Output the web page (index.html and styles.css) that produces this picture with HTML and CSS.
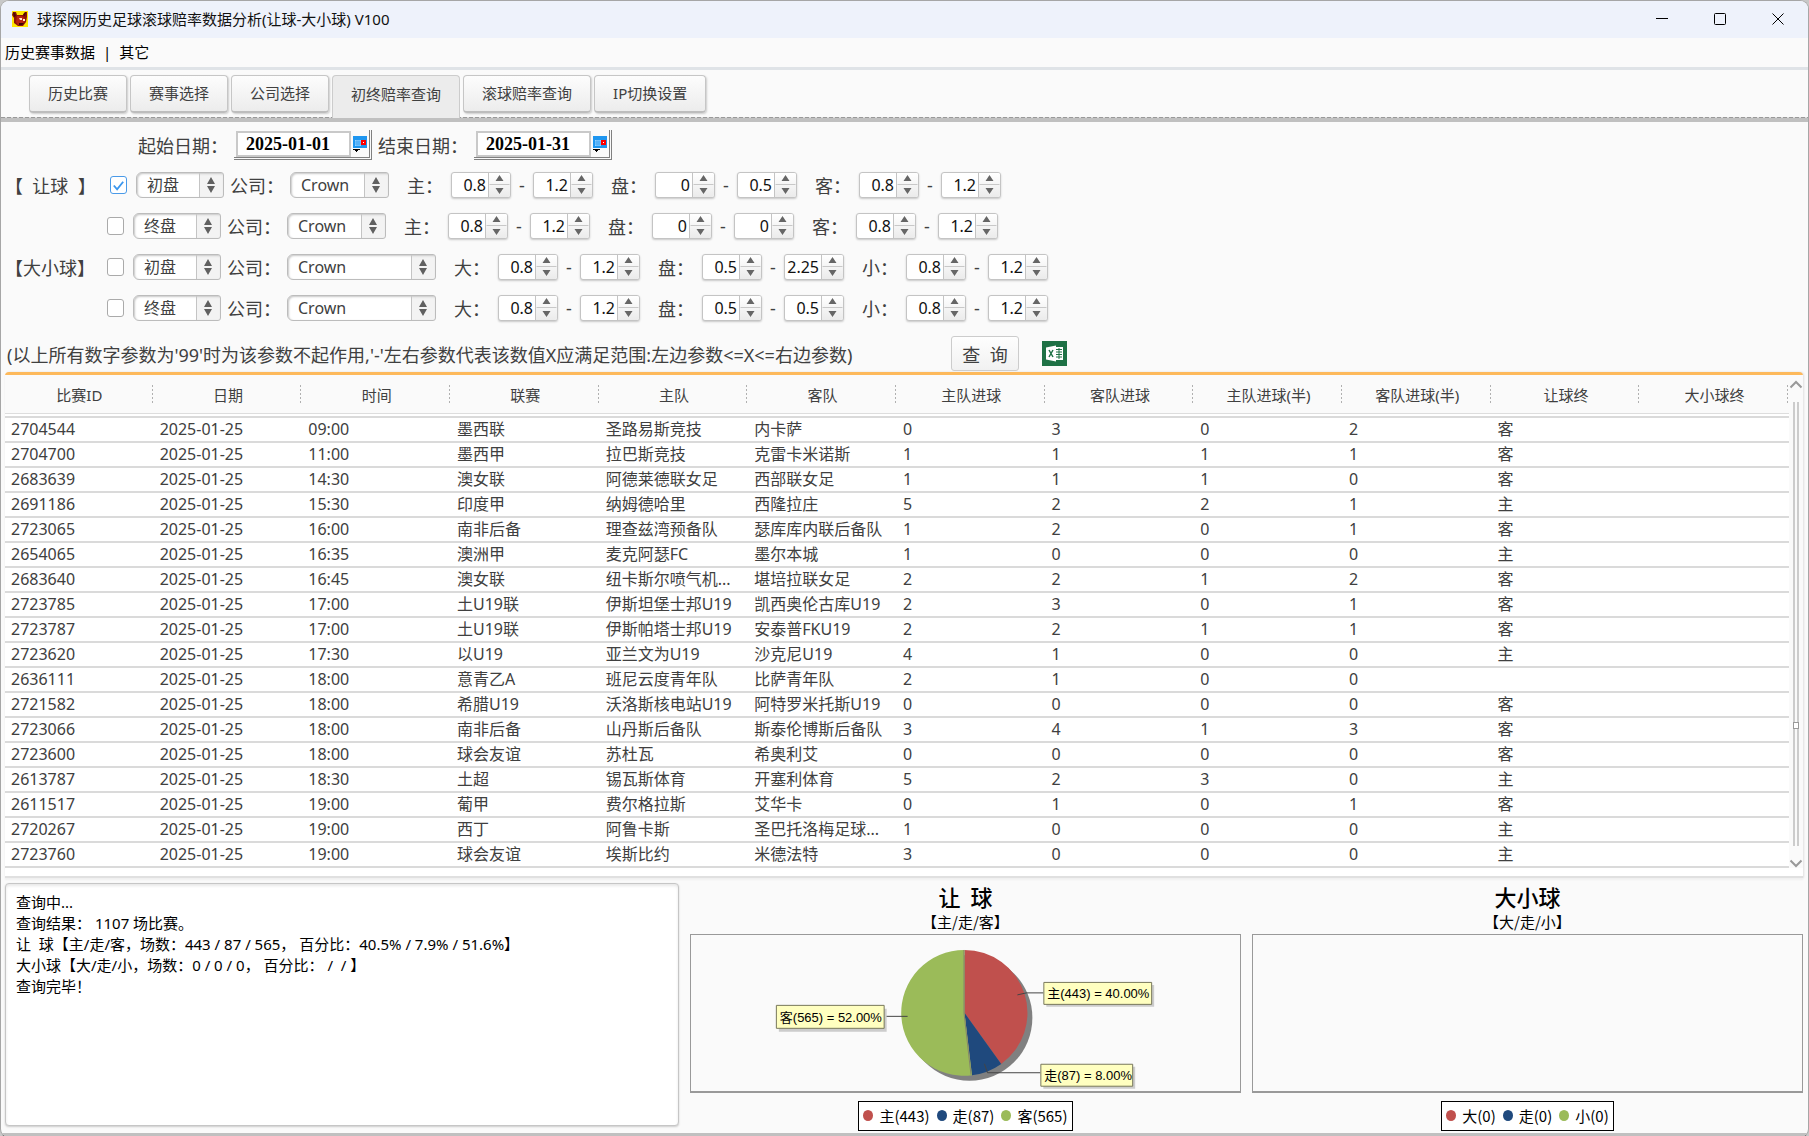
FILE: index.html
```html
<!DOCTYPE html>
<html lang="zh-CN">

<head>
	<meta charset="UTF-8">
	<title>球探网历史足球滚球赔率数据分析(让球-大小球) V100</title>
	<link rel="stylesheet" href="styles.css">
</head>

<body>
	<header class="titlebar">
		<svg class="app-icon" viewBox="0 0 16 16" aria-hidden="true">
			<rect width="16" height="16" fill="#ffe600"/>
			<path d="M1 1h3l1 3h6l2-3h2v5l-1 5-3 4H6L2 12V7L0 4z" fill="#8c1208"/>
			<path d="M5 5h5l3 3v2l-4 4H6L4 11z" fill="#b8240f"/>
			<path d="M1 1l2 1 1 3-2 1zM14 1l-1 4-2-1 1-2z" fill="#4a0a05"/>
			<path d="M7 7h3v2H8zM11 8h2v2h-2z" fill="#ffe9d0"/>
			<path d="M7 12h5l-2 2H7z" fill="#3c0602"/>
		</svg>
		<h1>球探网历史足球滚球赔率数据分析(让球-大小球) V100</h1>
		<div class="window-buttons">
			<button type="button" aria-label="最小化"><svg viewBox="0 0 12 12"><path d="M0 5.5h12"/></svg></button>
			<button type="button" aria-label="最大化"><svg viewBox="0 0 12 12"><rect x=".5" y=".5" width="11" height="11" rx="1"/></svg></button>
			<button type="button" aria-label="关闭"><svg viewBox="0 0 12 12"><path d="M.5.5l11 11M11.5.5l-11 11"/></svg></button>
		</div>
	</header>

	<nav class="menu">
		<a href="#history">历史赛事数据</a><span>|</span><a href="#other">其它</a>
	</nav>

	<nav class="tabs">
		<button type="button">历史比赛</button>
		<button type="button">赛事选择</button>
		<button type="button">公司选择</button>
		<button type="button" class="active">初终赔率查询</button>
		<button type="button">滚球赔率查询</button>
		<button type="button">IP切换设置</button>
	</nav>

	<form class="filters">
		<div class="dates">
			<label for="date-from">起始日期：</label>
			<span class="date-box">
				<input id="date-from" type="text" value="2025-01-01">
				<button type="button" aria-label="选择起始日期"><svg viewBox="0 0 14 16"><path d="M0 0h14v12H0z" fill="#1e96f0"/><path d="M2 4h6v6H2z" fill="#8fd0ff"/><path d="M2 6h6M2 8h6M4 4v6M6 4v6" stroke="#1e96f0" stroke-width=".6"/><path d="M8 4h5v5H8z" fill="#f00"/><path d="M10 6h1v1h-1z" fill="#fff"/><path d="M0 13h7v1H5v1H4v1H3v-1H2v-1H0z"/></svg></button>
			</span>
			<label for="date-to">结束日期：</label>
			<span class="date-box">
				<input id="date-to" type="text" value="2025-01-31">
				<button type="button" aria-label="选择结束日期"><svg viewBox="0 0 14 16"><path d="M0 0h14v12H0z" fill="#1e96f0"/><path d="M2 4h6v6H2z" fill="#8fd0ff"/><path d="M2 6h6M2 8h6M4 4v6M6 4v6" stroke="#1e96f0" stroke-width=".6"/><path d="M8 4h5v5H8z" fill="#f00"/><path d="M10 6h1v1h-1z" fill="#fff"/><path d="M0 13h7v1H5v1H4v1H3v-1H2v-1H0z"/></svg></button>
			</span>
		</div>

		<div class="filter-row">
			<span class="group wide">【&nbsp; 让球&nbsp; 】</span>
			<input type="checkbox" aria-label="让球初盘" checked>
			<select aria-label="盘口"><option>初盘</option><option>终盘</option></select>
			<label class="company" for="company-1">公司：</label>
			<select id="company-1" class="narrow"><option>Crown</option></select>
			<label class="odds" for="a1">主：</label>
			<input id="a1" type="number" step="any" value="0.8"><span class="dash">-</span><input type="number" step="any" value="1.2" aria-label="主上限">
			<label class="odds" for="a2">盘：</label>
			<input id="a2" type="number" step="any" value="0"><span class="dash">-</span><input type="number" step="any" value="0.5" aria-label="盘上限">
			<label class="odds" for="a3">客：</label>
			<input id="a3" type="number" step="any" value="0.8"><span class="dash">-</span><input type="number" step="any" value="1.2" aria-label="客上限">
		</div>
		<div class="filter-row">
			<span class="group"></span>
			<input type="checkbox" aria-label="让球终盘">
			<select aria-label="盘口"><option>终盘</option><option>初盘</option></select>
			<label class="company" for="company-2">公司：</label>
			<select id="company-2" class="narrow"><option>Crown</option></select>
			<label class="odds" for="b1">主：</label>
			<input id="b1" type="number" step="any" value="0.8"><span class="dash">-</span><input type="number" step="any" value="1.2" aria-label="主上限">
			<label class="odds" for="b2">盘：</label>
			<input id="b2" type="number" step="any" value="0"><span class="dash">-</span><input type="number" step="any" value="0" aria-label="盘上限">
			<label class="odds" for="b3">客：</label>
			<input id="b3" type="number" step="any" value="0.8"><span class="dash">-</span><input type="number" step="any" value="1.2" aria-label="客上限">
		</div>
		<div class="filter-row">
			<span class="group">【大小球】</span>
			<input type="checkbox" aria-label="大小球初盘">
			<select aria-label="盘口"><option>初盘</option><option>终盘</option></select>
			<label class="company" for="company-3">公司：</label>
			<select id="company-3" class="broad"><option>Crown</option></select>
			<label class="odds" for="c1">大：</label>
			<input id="c1" type="number" step="any" value="0.8"><span class="dash">-</span><input type="number" step="any" value="1.2" aria-label="大上限">
			<label class="odds" for="c2">盘：</label>
			<input id="c2" type="number" step="any" value="0.5"><span class="dash">-</span><input type="number" step="any" value="2.25" aria-label="盘上限">
			<label class="odds" for="c3">小：</label>
			<input id="c3" type="number" step="any" value="0.8"><span class="dash">-</span><input type="number" step="any" value="1.2" aria-label="小上限">
		</div>
		<div class="filter-row">
			<span class="group"></span>
			<input type="checkbox" aria-label="大小球终盘">
			<select aria-label="盘口"><option>终盘</option><option>初盘</option></select>
			<label class="company" for="company-4">公司：</label>
			<select id="company-4" class="broad"><option>Crown</option></select>
			<label class="odds" for="d1">大：</label>
			<input id="d1" type="number" step="any" value="0.8"><span class="dash">-</span><input type="number" step="any" value="1.2" aria-label="大上限">
			<label class="odds" for="d2">盘：</label>
			<input id="d2" type="number" step="any" value="0.5"><span class="dash">-</span><input type="number" step="any" value="0.5" aria-label="盘上限">
			<label class="odds" for="d3">小：</label>
			<input id="d3" type="number" step="any" value="0.8"><span class="dash">-</span><input type="number" step="any" value="1.2" aria-label="小上限">
		</div>

		<div class="actions">
			<p>(以上所有数字参数为'99'时为该参数不起作用,'-'左右参数代表该数值X应满足范围:左边参数&lt;=X&lt;=右边参数)</p>
			<button type="button" class="query">查&nbsp; 询</button>
			<button type="button" class="excel" aria-label="导出Excel">
				<svg viewBox="0 0 25 25">
					<rect width="25" height="25" fill="#1e7145"/>
					<path d="M13 6h8v13h-8z" fill="#fff"/>
					<path d="M14 8.500h6M14 11h6M14 13.500h6M14 16h6M17 7v11" stroke="#1e7145"/>
					<path d="M4 6.500l10-2v16l-10-2z" fill="#fff"/>
					<path d="M7 9l4 7M11 9l-4 7" stroke="#1e7145" stroke-width="1.500"/>
				</svg>
			</button>
		</div>
	</form>

	<section class="results">
		<table>
			<thead>
				<tr><th>比赛ID</th><th>日期</th><th>时间</th><th>联赛</th><th>主队</th><th>客队</th><th>主队进球</th><th>客队进球</th><th>主队进球(半)</th><th>客队进球(半)</th><th>让球终</th><th>大小球终</th></tr>
			</thead>
			<tbody>
				<tr><td>2704544</td><td>2025-01-25</td><td>09:00</td><td>墨西联</td><td>圣路易斯竞技</td><td>内卡萨</td><td>0</td><td>3</td><td>0</td><td>2</td><td>客</td><td></td></tr>
				<tr><td>2704700</td><td>2025-01-25</td><td>11:00</td><td>墨西甲</td><td>拉巴斯竞技</td><td>克雷卡米诺斯</td><td>1</td><td>1</td><td>1</td><td>1</td><td>客</td><td></td></tr>
				<tr><td>2683639</td><td>2025-01-25</td><td>14:30</td><td>澳女联</td><td>阿德莱德联女足</td><td>西部联女足</td><td>1</td><td>1</td><td>1</td><td>0</td><td>客</td><td></td></tr>
				<tr><td>2691186</td><td>2025-01-25</td><td>15:30</td><td>印度甲</td><td>纳姆德哈里</td><td>西隆拉庄</td><td>5</td><td>2</td><td>2</td><td>1</td><td>主</td><td></td></tr>
				<tr><td>2723065</td><td>2025-01-25</td><td>16:00</td><td>南非后备</td><td>理查兹湾预备队</td><td>瑟库库内联后备队</td><td>1</td><td>2</td><td>0</td><td>1</td><td>客</td><td></td></tr>
				<tr><td>2654065</td><td>2025-01-25</td><td>16:35</td><td>澳洲甲</td><td>麦克阿瑟FC</td><td>墨尔本城</td><td>1</td><td>0</td><td>0</td><td>0</td><td>主</td><td></td></tr>
				<tr><td>2683640</td><td>2025-01-25</td><td>16:45</td><td>澳女联</td><td>纽卡斯尔喷气机...</td><td>堪培拉联女足</td><td>2</td><td>2</td><td>1</td><td>2</td><td>客</td><td></td></tr>
				<tr><td>2723785</td><td>2025-01-25</td><td>17:00</td><td>土U19联</td><td>伊斯坦堡士邦U19</td><td>凯西奥伦古库U19</td><td>2</td><td>3</td><td>0</td><td>1</td><td>客</td><td></td></tr>
				<tr><td>2723787</td><td>2025-01-25</td><td>17:00</td><td>土U19联</td><td>伊斯帕塔士邦U19</td><td>安泰普FKU19</td><td>2</td><td>2</td><td>1</td><td>1</td><td>客</td><td></td></tr>
				<tr><td>2723620</td><td>2025-01-25</td><td>17:30</td><td>以U19</td><td>亚兰文为U19</td><td>沙克尼U19</td><td>4</td><td>1</td><td>0</td><td>0</td><td>主</td><td></td></tr>
				<tr><td>2636111</td><td>2025-01-25</td><td>18:00</td><td>意青乙A</td><td>班尼云度青年队</td><td>比萨青年队</td><td>2</td><td>1</td><td>0</td><td>0</td><td></td><td></td></tr>
				<tr><td>2721582</td><td>2025-01-25</td><td>18:00</td><td>希腊U19</td><td>沃洛斯核电站U19</td><td>阿特罗米托斯U19</td><td>0</td><td>0</td><td>0</td><td>0</td><td>客</td><td></td></tr>
				<tr><td>2723066</td><td>2025-01-25</td><td>18:00</td><td>南非后备</td><td>山丹斯后备队</td><td>斯泰伦博斯后备队</td><td>3</td><td>4</td><td>1</td><td>3</td><td>客</td><td></td></tr>
				<tr><td>2723600</td><td>2025-01-25</td><td>18:00</td><td>球会友谊</td><td>苏杜瓦</td><td>希奥利艾</td><td>0</td><td>0</td><td>0</td><td>0</td><td>客</td><td></td></tr>
				<tr><td>2613787</td><td>2025-01-25</td><td>18:30</td><td>土超</td><td>锡瓦斯体育</td><td>开塞利体育</td><td>5</td><td>2</td><td>3</td><td>0</td><td>主</td><td></td></tr>
				<tr><td>2611517</td><td>2025-01-25</td><td>19:00</td><td>葡甲</td><td>费尔格拉斯</td><td>艾华卡</td><td>0</td><td>1</td><td>0</td><td>1</td><td>客</td><td></td></tr>
				<tr><td>2720267</td><td>2025-01-25</td><td>19:00</td><td>西丁</td><td>阿鲁卡斯</td><td>圣巴托洛梅足球...</td><td>1</td><td>0</td><td>0</td><td>0</td><td>主</td><td></td></tr>
				<tr><td>2723760</td><td>2025-01-25</td><td>19:00</td><td>球会友谊</td><td>埃斯比约</td><td>米德法特</td><td>3</td><td>0</td><td>0</td><td>0</td><td>主</td><td></td></tr>
			</tbody>
		</table>
		<div class="scrollbar" aria-hidden="true">
			<svg viewBox="0 0 14 9"><path d="M1.500 7.500L7 2l5.500 5.500"/></svg>
			<div class="track"><i></i></div>
			<svg viewBox="0 0 14 9"><path d="M1.500 1.500L7 7l5.500-5.500"/></svg>
		</div>
	</section>

	<section class="summary">
		<textarea class="log" aria-label="查询结果" readonly>
查询中...
查询结果： 1107 场比赛。
让  球【主/走/客，场数：443 / 87 / 565， 百分比：40.5% / 7.9% / 51.6%】
大小球【大/走/小，场数：0 / 0 / 0， 百分比： /  / 】
查询完毕！</textarea>

		<figure class="chart">
			<h2>让&nbsp; 球</h2>
			<h3>【主/走/客】</h3>
			<div class="plot">
				<svg viewBox="0 0 550 156">
					<circle cx="279" cy="83" r="63" fill="#808080"/>
					<path d="M274 78V15A63 63 0 0 1 310.800 129.200z" fill="#c0504d"/>
					<path d="M274 78L310.800 129.200A63 63 0 0 1 281.500 140.500z" fill="#1f497d"/>
					<path d="M274 78L281.500 140.500A63 63 0 1 1 274 15z" fill="#9bbb59"/>
					<path d="M273.500 15v63l7 62" fill="none" stroke="#85856a"/>
					<path d="M327 60l9-2h17M294 129l3 9h53M194 81.500h23" fill="none" stroke="#444"/>
					<g class="tip">
						<path class="tip-shadow" d="M356 50h108v22H356zM353 132h92v22h-92zM88 74h108v23H88z"/>
						<path class="tip-box" d="M353.500 47.500h108v22h-108zM350.500 129.500h92v22h-92zM85.500 70.500h108v23h-108z"/>
						<text x="357" y="63">主(443) = 40.00%</text>
						<text x="354" y="145">走(87) = 8.00%</text>
						<text x="89" y="87">客(565) = 52.00%</text>
					</g>
				</svg>
			</div>
			<figcaption class="legend"><i class="red"></i>主(443)<i class="blue"></i>走(87)<i class="green"></i>客(565)</figcaption>
		</figure>

		<figure class="chart">
			<h2>大小球</h2>
			<h3>【大/走/小】</h3>
			<div class="plot"></div>
			<figcaption class="legend"><i class="red"></i>大(0)<i class="blue"></i>走(0)<i class="green"></i>小(0)</figcaption>
		</figure>
	</section>
</body>

</html>
```
FILE: styles.css
```css
* {
	box-sizing: border-box;
}

html {
	background: #c8c8c8;
}

body {
	display: flex;
	flex-direction: column;
	min-height: 100vh;
	margin: 0;
	border: 1px solid #a6a6a6;
	border-bottom: 1px solid #777;
	border-radius: 9px;
	overflow: hidden;
	background: #fafafa;
	color: #404040;
	font-family: "Noto Sans", "Noto Sans CJK SC", sans-serif;
	font-size: 15px;
}

button,
input,
select,
textarea {
	margin: 0;
	color: inherit;
	font-family: inherit;
	font-size: 16px;
}

button {
	padding: 0;
	border: 0;
	background: none;
}

svg {
	display: block;
}

/* title bar and menu */
.titlebar {
	display: flex;
	align-items: center;
	height: 37px;
	padding: 0 1px 2px 11px;
	background: #eef2fb;
	color: #111;
}

.app-icon {
	width: 16px;
	height: 16px;
	margin-right: 9px;
}

.titlebar h1 {
	flex: 1;
	margin: 0;
	font-size: 15px;
	font-weight: normal;
}

.window-buttons {
	display: flex;
}

.window-buttons button {
	display: flex;
	align-items: center;
	justify-content: center;
	width: 58px;
	height: 35px;
}

.window-buttons svg {
	width: 12px;
	height: 12px;
	fill: none;
	stroke: #000;
}

.menu {
	display: flex;
	gap: 8px;
	height: 32px;
	padding-left: 4px;
	border-bottom: 3px solid #dfe3e7;
	line-height: 29px;
	color: #000;
}

.menu a {
	color: inherit;
	text-decoration: none;
}

/* tabs */
.tabs {
	display: flex;
	gap: 3px;
	height: 52px;
	padding: 5px 0 0 28px;
	border-bottom: 4px solid #c0c0c0;
	background: repeating-linear-gradient(90deg, #999 0 4px, #ddd 4px 6px) bottom / 100% 1px no-repeat;
}

.tabs button {
	height: 38px;
	padding: 0 18px 2px;
	border: 1px solid #c6c6c6;
	border-bottom: 2px solid #bdbdbd;
	border-radius: 4px;
	background: linear-gradient(#fdfdfd, #ececec);
	box-shadow: 1px 1px 2px #ccc;
	font-size: 15px;
}

.tabs .active {
	height: 43px;
	padding-bottom: 8px;
	border: 1px solid #ccc;
	border-bottom: 0;
	border-radius: 4px 4px 0 0;
	background: #ececec;
	box-shadow: none;
}

/* filters */
.filters {
	font-size: 18px;
}

.dates {
	display: flex;
	align-items: center;
	height: 42px;
	padding: 4px 0 0 137px;
}

.dates label {
	width: 96px;
}

.date-box {
	display: flex;
	align-items: center;
	height: 30px;
	width: 138px;
	padding-left: 2px;
	margin-right: 6px;
	border-right: 3px double #808080;
	border-bottom: 3px double #808080;
}

.date-box input {
	width: 115px;
	height: 26px;
	padding: 2px 0 0 8px;
	border: 2px solid #c9c9c9;
	background: #fff;
	color: #000;
	font: bold 18px "Liberation Serif", serif;
}

.date-box button {
	padding-left: 2px;
}

.date-box svg {
	width: 14px;
	height: 16px;
}

.filter-row {
	display: flex;
	align-items: center;
	height: 41px;
}

.group {
	width: 106px;
	padding-left: 4px;
	white-space: pre;
}

.group.wide {
	width: 109px;
}

input[type="checkbox"] {
	appearance: none;
	flex: none;
	width: 17px;
	height: 18px;
	margin-right: 9px;
	border: 1px solid #aaa;
	border-radius: 3px;
	background: #fff;
}

input[type="checkbox"]:checked {
	border-color: #4a9ae8;
	background: #fff url('data:image/svg+xml,<svg xmlns="http://www.w3.org/2000/svg" viewBox="0 0 16 16"><path d="M3 8l3.500 4L13 4" fill="none" stroke="%233b97ee" stroke-width="2"/></svg>') center / contain;
}

select {
	appearance: none;
	width: 88px;
	height: 26px;
	padding: 0 28px 0 10px;
	border: 1px solid #bcbcbc;
	border-radius: 6px 3px 3px 6px;
	background:
		url('data:image/svg+xml,<svg xmlns="http://www.w3.org/2000/svg" viewBox="0 0 8 16"><path d="M0 7l4-7 4 7zM0 9h8l-4 7z" fill="%23606060"/></svg>') right 8px center / 8px 16px no-repeat,
		linear-gradient(90deg, #c4c4c4 0 1px, #f3f3f3 1px) right / 24px 100% no-repeat,
		#fff;
	box-shadow: inset 1px 1px 2px #c8c8c8;
	line-height: 22px;
}

.company {
	width: 66px;
	padding-left: 6px;
}

.narrow {
	width: 99px;
}

.broad {
	width: 149px;
}

.odds {
	width: 62px;
	padding-left: 18px;
}

.dash {
	width: 22px;
	text-align: center;
}

input[type="number"] {
	width: 60px;
	height: 26px;
	padding: 0 0 0 2px;
	border: 1px solid #c4c4c4;
	border-radius: 3px;
	background: #fff;
	box-shadow: 0 1px 2px #c8c8c8;
	color: #111;
	text-align: right;
}

input[type="number"]::-webkit-inner-spin-button {
	appearance: none;
	width: 21px;
	height: 24px;
	margin-left: 2px;
	border-left: 1px solid #c4c4c4;
	background:
		url('data:image/svg+xml,<svg xmlns="http://www.w3.org/2000/svg" viewBox="0 0 20 24"><path d="M6 8l4-6 4 6zM6 15h8l-4 6z" fill="%23666"/><path d="M0 11.500h20" stroke="%23c8c8c8"/></svg>') center / 100% 100% no-repeat,
		linear-gradient(#fff, #ebebeb);
	opacity: 1;
}

.actions {
	display: flex;
	align-items: center;
	height: 44px;
	padding: 7px 0 0 6px;
}

.actions p {
	width: 944px;
	margin: 0;
}

.query {
	width: 68px;
	height: 35px;
	margin-right: 23px;
	border: 1px solid #ccc;
	border-radius: 3px;
	background: linear-gradient(#fefefe, #f1f1f1);
	font-size: 18px;
}

.excel svg {
	width: 25px;
	height: 25px;
	fill: none;
}

/* results table */
.results {
	display: flex;
	margin: 0 5px 4px 4px;
	padding: 0 0 8px;
	border-top: 3px solid #fdb95b;
	border-bottom: 2px solid #e0e0e0;
	border-radius: 4px 4px 0 0;
	background: #fff;
	box-shadow: 0 2px 2px #f0f0f0, 1px 0 2px #ddd;
}

table {
	flex: 1;
	table-layout: fixed;
	width: 100%;
	border-spacing: 0;
}

th {
	height: 43px;
	padding: 0 0 2px;
	border-bottom: 2px solid #dadada;
	background:
		repeating-linear-gradient(#b0b0b0 0 2px, transparent 2px 4px) right 1px top 10px / 1px 19px no-repeat,
		#fafafa;
	box-shadow: inset 0 -2px #fff, inset 0 -3px #ddd;
	font-size: 15px;
	font-weight: normal;
}

td {
	height: 25px;
	padding: 0 0 0 6px;
	border-bottom: 2px solid #dadada;
	font-size: 16px;
	line-height: 23px;
	white-space: nowrap;
}

.scrollbar {
	display: flex;
	flex-direction: column;
	align-items: center;
	width: 14px;
	padding-top: 5px;
	background: #fafafa;
}

.scrollbar svg {
	width: 14px;
	height: 9px;
	fill: none;
	stroke: #999;
	stroke-width: 2;
}

.track {
	position: relative;
	flex: 1;
	width: 6px;
	margin: 13px 0;
	border: solid #ccc;
	border-width: 0 2px;
}

.track i {
	position: absolute;
	top: 72%;
	left: -2px;
	width: 6px;
	height: 7px;
	border: 1px solid #999;
	background: #fff;
}

/* log and charts */
.summary {
	flex: 1;
	display: grid;
	grid-template-columns: 674fr 551fr 551fr;
	gap: 11px;
	padding: 0 5px 0 4px;
	border-bottom: 4px solid #c0c0c0;
}

.log {
	height: auto;
	margin: 1px 0 7px;
	padding: 8px 10px;
	border: 1px solid #c6c6c6;
	border-radius: 4px;
	outline: 0;
	background: #fff;
	box-shadow: inset 0 2px 3px #e8e8e8, 0 1px 2px #ccc;
	color: #000;
	font-size: 15px;
	line-height: 21px;
	resize: none;
}

.chart {
	display: flex;
	flex-direction: column;
	align-items: center;
	margin: 0 0 2px;
	color: #000;
	font-family: "Noto Sans CJK SC", sans-serif;
}

.chart h2 {
	margin: 0;
	font-size: 22px;
	font-weight: 500;
	line-height: 28px;
}

.chart h3 {
	margin: 0;
	font-size: 15px;
	font-weight: normal;
	line-height: 24px;
}

.plot {
	flex: 1;
	align-self: stretch;
	margin-bottom: 8px;
	border: 1px solid #999;
	border-bottom-width: 2px;
}

.plot svg {
	width: 100%;
	height: 100%;
}

.tip-shadow {
	fill: #ccc;
}

.tip-box {
	fill: #ffffc0;
	stroke: #77775a;
}

.tip text {
	font-family: "Liberation Sans", "Noto Sans CJK SC", sans-serif;
	font-size: 13px;
}

.legend {
	display: flex;
	align-items: center;
	height: 30px;
	padding: 0 4px;
	border: 1px solid #000;
	background: #fff;
	font-size: 15px;
}

.legend i {
	width: 10px;
	height: 11px;
	margin: 0 6px 0 7px;
	border-radius: 50%;
}

.legend i:first-child {
	margin-left: 0;
}

.red {
	background: #c0504d;
}

.blue {
	background: #1f497d;
}

.green {
	background: #9bbb59;
}
```
